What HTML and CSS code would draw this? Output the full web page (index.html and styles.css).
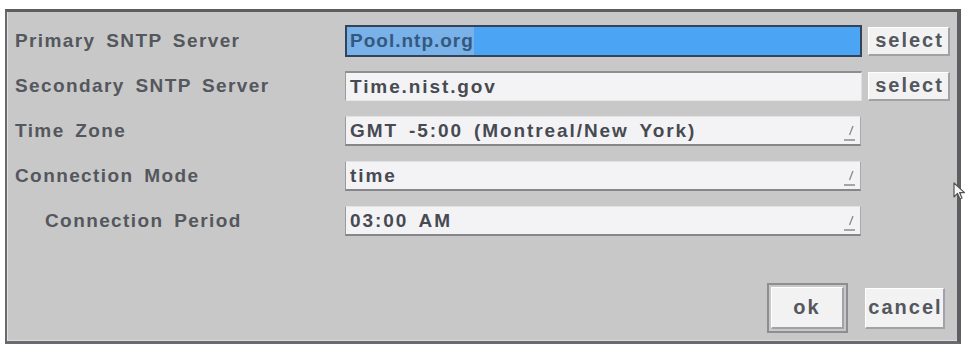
FILE: index.html
```html
<!DOCTYPE html>
<html>
<head>
<meta charset="utf-8">
<link rel="stylesheet" href="styles.css">
</head>
<body>
<div class="dialog">
  <div class="form">
    <div class="label">Primary SNTP Server</div>
    <div class="field input focus"><span class="sel">Pool.ntp.org</span></div>
    <div class="btn small">select</div>

    <div class="label">Secondary SNTP Server</div>
    <div class="field input">Time.nist.gov</div>
    <div class="btn small">select</div>

    <div class="label">Time Zone</div>
    <div class="field drop"><span>GMT -5:00 (Montreal/New York)</span><svg class="dd" width="12" height="17" viewBox="0 0 12 17"><path d="M9 2 L5.5 11" stroke="#8a8a8a" stroke-width="1.3" fill="none"/><path d="M0 16 H11" stroke="#7a7a7a" stroke-width="1.3"/></svg></div>
    <div></div>

    <div class="label">Connection Mode</div>
    <div class="field drop"><span>time</span><svg class="dd" width="12" height="17" viewBox="0 0 12 17"><path d="M9 2 L5.5 11" stroke="#8a8a8a" stroke-width="1.3" fill="none"/><path d="M0 16 H11" stroke="#7a7a7a" stroke-width="1.3"/></svg></div>
    <div></div>

    <div class="label sub">Connection Period</div>
    <div class="field drop"><span>03:00 AM</span><svg class="dd" width="12" height="17" viewBox="0 0 12 17"><path d="M9 2 L5.5 11" stroke="#8a8a8a" stroke-width="1.3" fill="none"/><path d="M0 16 H11" stroke="#7a7a7a" stroke-width="1.3"/></svg></div>
    <div></div>
  </div>
  <div class="actions">
    <div class="okframe"><div class="btn ok">ok</div></div>
    <div class="btn cancel">cancel</div>
  </div>
  <svg class="cursor" width="14" height="20" viewBox="0 0 14 20"><path d="M1 1 L1 15 L4.5 11.5 L7 17 L9 16 L6.6 10.6 L11.5 10.6 Z" fill="#f4f4f4" stroke="#555" stroke-width="1.2" stroke-linejoin="round"/></svg>
</div>
</body>
</html>
```

FILE: styles.css
```css
html, body {
  margin: 0;
  padding: 0;
  background: #ffffff;
}
body {
  width: 965px;
  height: 345px;
  overflow: hidden;
  font-family: "Liberation Sans", Arial, sans-serif;
  font-weight: bold;
  font-size: 19px;
  letter-spacing: 1.4px;
  word-spacing: 4px;
}
.dialog {
  position: relative;
  box-sizing: border-box;
  margin: 9px 0 0 5px;
  width: 956px;
  height: 335px;
  background: #c8c8c8;
  border-top: 3px solid #5d5d60;
  border-left: 2px solid #6a6a6d;
  border-right: 4px solid #5d5d62;
  border-bottom: 3px solid #6a6a70;
  box-shadow: inset 1px 0 0 #e0e0e0, inset 0 -1px 0 #dcdcdc;
  padding: 14px 0 0 8px;
  display: flex;
  flex-direction: column;
}
.form {
  display: grid;
  grid-template-columns: 324px 517px 82px;
  grid-auto-rows: 30px;
  column-gap: 6px;
  row-gap: 15px;
  align-items: center;
}
.label {
  color: #54575d;
  white-space: nowrap;
}
.label.sub {
  padding-left: 30px;
}
.field {
  box-sizing: border-box;
  height: 30px;
  display: flex;
  align-items: center;
  color: #474a51;
  white-space: nowrap;
  padding-left: 4px;
  letter-spacing: 1.9px;
}
.input {
  background: #f3f3f5;
  border-top: 2px solid #8e8e92;
  border-left: 1px solid #9a9a9e;
  border-right: 1px solid #dedede;
  border-bottom: 1px solid #e6e6e6;
}
.input.focus {
  height: 32px;
  background: #4ba4f4;
  border: 2px solid #33445a;
  padding-left: 0;
  align-items: stretch;
  color: #35587f;
}
.sel {
  display: flex;
  align-items: center;
  padding-left: 3px;
  background: #78b2e8;
  letter-spacing: 1px;
}
.drop {
  width: 516px;
  justify-content: space-between;
  background: #f3f3f6;
  border-top: 1px solid #e2e2e4;
  border-left: 1px solid #9a9a9e;
  border-right: 1px solid #a8a8aa;
  border-bottom: 2px solid #85858a;
  padding-right: 4px;
}
.dd {
  flex: none;
  margin-top: 4px;
}
.btn {
  box-sizing: border-box;
  background: #f2f2f3;
  color: #54575d;
  display: flex;
  align-items: center;
  justify-content: center;
  border-top: 1px solid #ffffff;
  border-left: 1px solid #ffffff;
  border-right: 2px solid #a2a2a6;
  border-bottom: 2px solid #a2a2a6;
  font-size: 20px;
  letter-spacing: 2px;
}
.small {
  width: 82px;
  height: 29px;
  padding-left: 2px;
}
.actions {
  display: flex;
  justify-content: flex-end;
  align-items: center;
  column-gap: 17px;
  margin-top: 47px;
  padding-right: 12px;
}
.okframe {
  box-sizing: border-box;
  width: 81px;
  height: 50px;
  border: 2px solid #8e8e92;
  padding: 2px;
  display: flex;
}
.ok {
  flex: 1;
}
.cancel {
  width: 80px;
  height: 41px;
  padding-left: 2px;
}
.cursor {
  position: absolute;
  right: -10px;
  top: 170px;
}
```
